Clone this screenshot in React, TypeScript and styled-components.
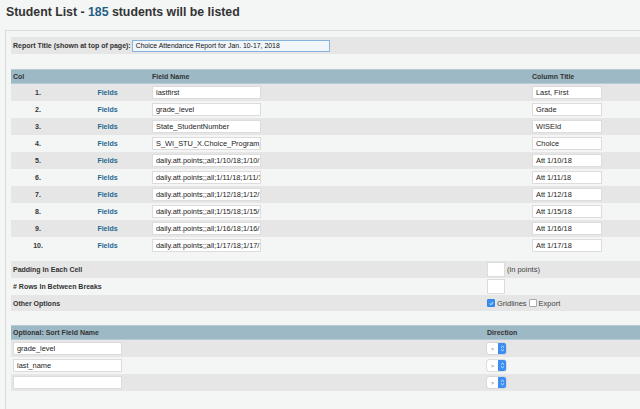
import styled, { createGlobalStyle } from "styled-components";

const GlobalStyle = createGlobalStyle`
  html, body {
    margin: 0;
    padding: 0;
    background: #f4f6f6;
    overflow: hidden;
  }
  body {
    font-family: "Liberation Sans", Arial, Helvetica, sans-serif;
    color: #333;
  }
`;

const Page = styled.div`
  width: 640px;
  height: 409px;
  overflow: hidden;
`;

const Title = styled.h1`
  margin: 0;
  padding: 5px 0 0 6px;
  height: 30px;
  box-sizing: border-box;
  font-size: 12.3px;
  line-height: 15px;
  font-weight: bold;
  color: #333;
`;

const Count = styled.span`
  color: #1f5f82;
`;

const Panel = styled.div`
  margin-left: 5px;
  width: 660px;
  border-top: 1px solid #dcdede;
  border-left: 1px solid #d8dada;
  padding: 6px 0 40px 5px;
  display: flex;
  flex-direction: column;
`;

const Row = styled.div<{ $shade?: boolean; $h?: number }>`
  display: grid;
  align-items: center;
  height: ${({ $h }) => $h ?? 17}px;
  background: ${({ $shade }) => ($shade ? "#e6e6e6" : "transparent")};
  font-size: 7px;
`;

const ReportRow = styled(Row)`
  display: flex;
  gap: 1px;
`;

const FieldGrid = styled(Row)`
  grid-template-columns: 54px 85px 380px 1fr;
`;

const SortGrid = styled(Row)`
  grid-template-columns: 474px 1fr;
`;

const Header = styled.div<{ $mt: number; $h?: number }>`
  margin-top: ${({ $mt }) => $mt}px;
  background: #9eb9c6;
  border-top: 1px solid #b7cbd4;
  border-bottom: 1px solid #b7cbd4;
  box-sizing: border-box;
  height: ${({ $h }) => $h ?? 15}px;
  font-weight: bold;
  font-size: 7px;
  color: #333;
`;

const Label = styled.span`
  font-weight: bold;
  color: #333;
  padding-left: 2px;
  white-space: nowrap;
`;

const ColNum = styled.span`
  font-weight: bold;
  text-align: center;
`;

const FieldsLink = styled.a`
  font-weight: bold;
  color: #256891;
  text-align: center;
  text-decoration: none;
`;

const Cell = styled.div`
  display: flex;
  align-items: center;
  gap: 2px;
  padding-left: 2px;
  white-space: nowrap;
`;

/* static text field, shows the value as the form field does */
const TextBox = styled.span<{ $w: number }>`
  display: inline-block;
  width: ${({ $w }) => $w}px;
  height: 13px;
  box-sizing: border-box;
  border: 1px solid #dcdcdc;
  background: #fff;
  font-size: 7.4px;
  line-height: 11px;
  color: #222;
  padding: 0 3px;
  overflow: hidden;
  white-space: nowrap;
`;

const TitleBox = styled(TextBox)`
  height: 12px;
  line-height: 10px;
  border: 1px solid #86b3dc;
  background: #f1f6fb;
  padding: 0 3px;
  font-size: 6.9px;
  color: #111;
`;

const SmallBox = styled(TextBox)`
  height: 15px;
`;

const Check = styled.span<{ $on?: boolean }>`
  display: inline-flex;
  align-items: center;
  justify-content: center;
  width: 6px;
  height: 6px;
  border-radius: 1px;
  border: 1px solid ${({ $on }) => ($on ? "#2f86e6" : "#aaa")};
  background: ${({ $on }) => ($on ? "#3b8ff0" : "#fff")};
`;

const OptText = styled.span`
  font-size: 7.5px;
  color: #444;
`;

const Select = styled.span`
  display: inline-flex;
  width: 19px;
  height: 11px;
  border-radius: 2px;
  overflow: hidden;
  box-shadow: 0 0 0 0.5px #c8c8c8;
  background: #fff;
`;

const SelectValue = styled.span`
  flex: 1;
  display: flex;
  align-items: center;
  justify-content: center;
  font-size: 5px;
  color: #555;
`;

const SelectArrow = styled.span`
  width: 8px;
  background: #3d8df2;
  display: flex;
  align-items: center;
  justify-content: center;
`;

// field values as far as they show inside the narrow boxes
const fields = [
  ["lastfirst", "Last, First"],
  ["grade_level", "Grade"],
  ["State_StudentNumber", "WISEId"],
  ["S_WI_STU_X.Choice_Program_Pa", "Choice"],
  ["daily.att.points;;all;1/10/18;1/10/1", "Att 1/10/18"],
  ["daily.att.points;;all;1/11/18;1/11/1", "Att 1/11/18"],
  ["daily.att.points;;all;1/12/18;1/12/1", "Att 1/12/18"],
  ["daily.att.points;;all;1/15/18;1/15/1", "Att 1/15/18"],
  ["daily.att.points;;all;1/16/18;1/16/1", "Att 1/16/18"],
  ["daily.att.points;;all;1/17/18;1/17/1", "Att 1/17/18"],
];

const sorts = ["grade_level", "last_name", ""];

function DirectionSelect() {
  return (
    <Select>
      <SelectValue>&gt;</SelectValue>
      <SelectArrow>
        <svg width="5" height="7" viewBox="0 0 5 7">
          <path d="M1 2.6 L2.5 1.2 L4 2.6 M1 4.4 L2.5 5.8 L4 4.4" stroke="#fff" strokeWidth="0.8" fill="none" />
        </svg>
      </SelectArrow>
    </Select>
  );
}

export default function App() {
  return (
    <Page>
      <GlobalStyle />
      <Title>
        Student List - <Count>185</Count> students will be listed
      </Title>

      <Panel>
        <ReportRow $shade>
          <Label>Report Title (shown at top of page):</Label>
          <TitleBox $w={198}>Choice Attendance Report for Jan. 10-17, 2018</TitleBox>
        </ReportRow>

        <Header $mt={15}>
          <FieldGrid $h={13}>
            <Label>Col</Label>
            <span />
            <Label>Field Name</Label>
            <Label>Column Title</Label>
          </FieldGrid>
        </Header>

        {fields.map(([name, title], i) => (
          <FieldGrid key={i} $shade={i % 2 === 0}>
            <ColNum>{i + 1}.</ColNum>
            <FieldsLink href="#">Fields</FieldsLink>
            <Cell>
              <TextBox $w={109}>{name}</TextBox>
            </Cell>
            <Cell>
              <TextBox $w={70}>{title}</TextBox>
            </Cell>
          </FieldGrid>
        ))}

        <SortGrid $shade $h={17} style={{ marginTop: 7 }}>
          <Label>Padding In Each Cell</Label>
          <Cell>
            <SmallBox $w={18} />
            <OptText>(in points)</OptText>
          </Cell>
        </SortGrid>
        <SortGrid $h={17}>
          <Label># Rows In Between Breaks</Label>
          <Cell>
            <SmallBox $w={18} />
          </Cell>
        </SortGrid>
        <SortGrid $shade $h={16}>
          <Label>Other Options</Label>
          <Cell>
            <Check $on>
              <svg width="5" height="5" viewBox="0 0 5 5">
                <path d="M1 2.6 L2 3.7 L4 1.2" stroke="#fff" strokeWidth="0.9" fill="none" />
              </svg>
            </Check>
            <OptText>Gridlines</OptText>
            <Check />
            <OptText>Export</OptText>
          </Cell>
        </SortGrid>

        <Header $mt={14}>
          <SortGrid $h={13}>
            <Label>Optional: Sort Field Name</Label>
            <Label>Direction</Label>
          </SortGrid>
        </Header>

        {sorts.map((s, i) => (
          <SortGrid key={i} $shade={i % 2 === 0}>
            <Cell>
              <TextBox $w={109}>{s}</TextBox>
            </Cell>
            <Cell>
              <DirectionSelect />
            </Cell>
          </SortGrid>
        ))}
      </Panel>
    </Page>
  );
}
